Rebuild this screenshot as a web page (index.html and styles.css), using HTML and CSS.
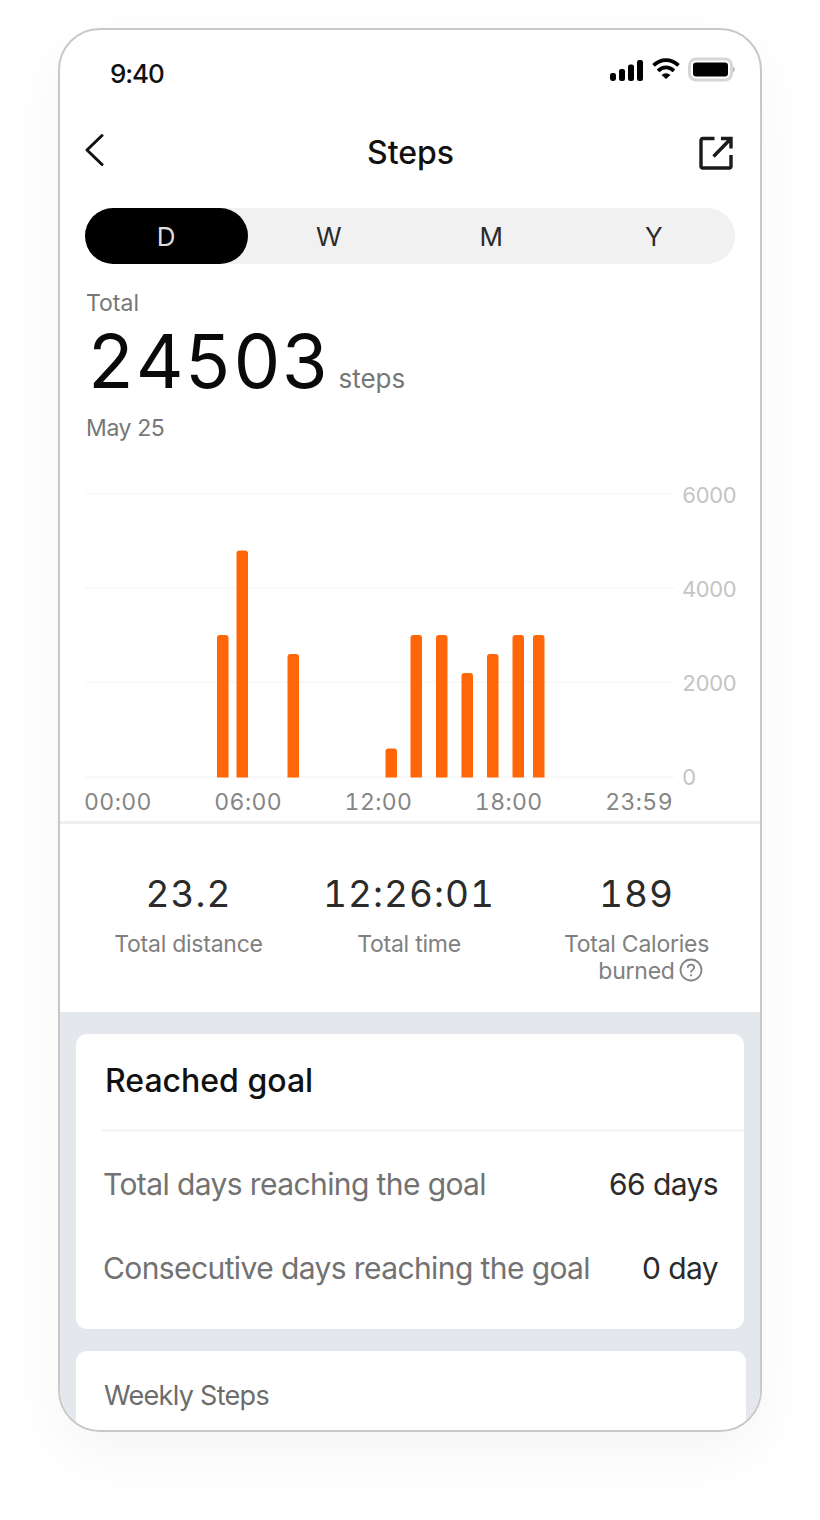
FILE: index.html
```html
<!DOCTYPE html>
<html lang="en">
<head>
<meta charset="UTF-8">
<meta name="viewport" content="width=device-width, initial-scale=1.0">
<title>Steps</title>
<link rel="stylesheet" href="styles.css">
</head>
<body>

<div class="phone">

    <!-- STATUS BAR -->
    <div class="status">
        <span class="time">9:40</span>
        <svg class="status-icons" width="125" height="26" viewBox="0 0 125 26">
            <rect x="0" y="16" width="6" height="8" rx="2.4"/>
            <rect x="9" y="12" width="6" height="12" rx="2.2"/>
            <rect x="18" y="7.5" width="6" height="16.5" rx="2.2"/>
            <rect x="27" y="3" width="6" height="21" rx="2.2"/>
            <path d="M43.500 8.300C51 1.300 61 1.300 68.500 8.300M48 13.800C53 9.300 59 9.300 64 13.800" fill="none" stroke="#000" stroke-width="3.8"/>
            <path d="M51.500 18Q56 14.500 60.500 18L56 22Z"/>
            <rect x="79.5" y="2" width="42" height="21" rx="6.5" fill="#fff" stroke="#d6d6d6" stroke-width="3"/>
            <rect x="83" y="5.5" width="35" height="14" rx="3"/>
            <path d="M123 9.500Q125 11 125 12.500T123 15.500Z" fill="#bbb"/>
        </svg>
    </div>

    <!-- HEADER -->
    <div class="header">
        <svg class="back" width="20" height="34" viewBox="0 0 20 34">
            <path d="M17 2.500L2 17L17 31.500" fill="none" stroke="#111" stroke-width="3" stroke-linecap="round" stroke-linejoin="round"/>
        </svg>
        <h1>Steps</h1>
        <svg width="34" height="34" viewBox="0 0 34 34" fill="none" stroke="#1a1a1a" stroke-width="3.4">
            <path d="M15.500 2.500H4Q2 2.500 2 4.500V30Q2 32 4 32H30Q32 32 32 30V19"/>
            <path d="M22 2.500H32V12.500M31.500 3L14.500 20.500"/>
        </svg>
    </div>

    <!-- TABS -->
    <div class="tabs">
        <div class="tab active">D</div>
        <div class="tab">W</div>
        <div class="tab">M</div>
        <div class="tab">Y</div>
    </div>

    <!-- TOTAL -->
    <div class="total">
        <div class="label">Total</div>
        <div class="value"><span class="number">24503</span><span class="unit">steps</span></div>
        <div class="date">May 25</div>
    </div>

    <!-- CHART -->
    <div class="chart">
        <svg class="plot" width="590" height="287" viewBox="0 0 590 287">
            <g fill="#f9f9f9">
                <rect y="1" width="589" height="2"/>
                <rect y="95" width="589" height="2"/>
                <rect y="189" width="589" height="2"/>
                <rect y="284" width="589" height="2"/>
            </g>
            <g fill="#ff6607">
                <path d="M132 285.500V146q0-3 3-3h5.500q3 0 3 3V285.500z"/>
                <path d="M151.500 285.500V61.500q0-3 3-3h5.500q3 0 3 3V285.500z"/>
                <path d="M202.500 285.500V165q0-3 3-3h5.500q3 0 3 3V285.500z"/>
                <path d="M300.500 285.500V259.500q0-3 3-3h5.500q3 0 3 3V285.500z"/>
                <path d="M325.500 285.500V146q0-3 3-3h5.500q3 0 3 3V285.500z"/>
                <path d="M351 285.500V146q0-3 3-3h5.500q3 0 3 3V285.500z"/>
                <path d="M376.500 285.500V184q0-3 3-3h5.500q3 0 3 3V285.500z"/>
                <path d="M402 285.500V165q0-3 3-3h5.500q3 0 3 3V285.500z"/>
                <path d="M427.500 285.500V146q0-3 3-3h5.500q3 0 3 3V285.500z"/>
                <path d="M448 285.500V146q0-3 3-3h5.500q3 0 3 3V285.500z"/>
            </g>
        </svg>
        <div class="y-axis">
            <span>6000</span>
            <span>4000</span>
            <span>2000</span>
            <span>0</span>
        </div>
    </div>
    <div class="x-axis">
        <span>00:00</span>
        <span>06:00</span>
        <span>12:00</span>
        <span>18:00</span>
        <span>23:59</span>
    </div>

    <!-- STATS -->
    <div class="stats">
        <div class="stat">
            <div class="stat-value">23.2</div>
            <div class="stat-label">Total distance</div>
        </div>
        <div class="stat">
            <div class="stat-value">12:26:01</div>
            <div class="stat-label">Total time</div>
        </div>
        <div class="stat">
            <div class="stat-value">189</div>
            <div class="stat-label">Total Calories</div>
            <div class="stat-label burned">burned
                <svg width="24" height="24" viewBox="0 0 24 24" fill="none" stroke="#858585" stroke-width="1.8">
                    <circle cx="12" cy="12" r="10.5"/>
                    <path d="M8.800 9.700C8.800 5.500 15.200 5.700 15.200 9.500C15.200 12 12 11.800 12 14.500M12 16.200V18.200"/>
                </svg>
            </div>
        </div>
    </div>

    <!-- CARDS -->
    <div class="cards">
        <div class="card">
            <h2>Reached goal</h2>
            <div class="row"><span>Total days reaching the goal</span><b>66 days</b></div>
            <div class="row"><span>Consecutive days reaching the goal</span><b>0 day</b></div>
        </div>
        <div class="card weekly">Weekly Steps</div>
    </div>

</div>

</body>
</html>
```
FILE: styles.css
```css
* { box-sizing: border-box; }
body {
    margin: 0;
    padding: 28px 58px 0;
    height: 1520px;
    overflow: hidden;
    background: #fff;
    color: #111;
    font-family: Inter, "Liberation Sans", sans-serif;
}
h1, h2 { margin: 0; font-weight: 500; }
svg { display: block; flex: none; }
.phone {
    width: 704px;
    height: 1404px;
    background: #fff;
    border: 2px solid #c8c8c8;
    border-radius: 42px;
    box-shadow: 0 22px 64px rgba(0,0,0,0.045);
    overflow: hidden;
}
.status {
    display: flex;
    justify-content: space-between;
    height: 78px;
    padding: 27px 25px 0 50px;
}
.time { font-size: 26px; line-height: 34px; font-weight: 500; letter-spacing: -1.1px; }
.header {
    display: flex;
    align-items: center;
    justify-content: space-between;
    height: 90px;
    padding: 0 27px 1px 25px;
}
.back { margin-bottom: 5px; }
.header h1 { font-size: 32px; line-height: 40px; padding-left: 17px; }

/* tabs */
.tabs {
    display: flex;
    height: 56px;
    margin: 10px 25px 0;
    background: #f1f1f1;
    border-radius: 28px;
}
.tab {
    flex: 1;
    color: #2b2b2b;
    font-size: 26px;
    line-height: 57px;
    text-align: center;
}
.tab.active { background: #000; color: #ddd; border-radius: 28px; }

/* total */
.total { height: 229px; padding: 22px 26px 0; color: #777; }
.label { font-size: 23px; line-height: 34px; }
.value { display: flex; align-items: baseline; height: 92px; }
.number {
    color: #0a0a0a;
    font-size: 74px;
    line-height: 82px;
    letter-spacing: 0.7px;
    padding-left: 1px;
    font-variant-numeric: tabular-nums;
}
.unit { font-size: 26px; margin-left: 8px; }
.date { font-size: 23px; line-height: 32px; letter-spacing: -0.4px; }

/* chart */
.chart { display: flex; padding: 0 0 0 25px; height: 286px; margin-top: -1px; }
.y-axis {
    display: flex;
    flex-direction: column;
    justify-content: space-between;
    height: 310px;
    margin: -11px 0 0 7px;
    color: #c4c4c4;
    font-size: 22px;
    line-height: 28px;
    letter-spacing: -0.8px;
    font-variant-numeric: tabular-nums;
}
.x-axis {
    display: flex;
    justify-content: space-between;
    height: 46px;
    padding: 9px 87px 0 24px;
    border-bottom: 3px solid #efefef;
    color: #858585;
    font-size: 23px;
    line-height: 30px;
    letter-spacing: 0.4px;
    font-variant-numeric: tabular-nums;
}

/* stats */
.stats { display: flex; height: 188px; padding-top: 46px; }
.stat { text-align: center; width: 226px; }
.stat:first-child { width: 236px; padding-left: 21px; }
.stat:last-child { padding-left: 3px; }
.stat-value {
    color: #2b2b2b;
    font-size: 37px;
    line-height: 48px;
    letter-spacing: 1px;
    font-variant-numeric: tabular-nums;
}
.stat-label { color: #808080; font-size: 23px; line-height: 27px; letter-spacing: -0.25px; margin-top: 13px; }
.burned {
    display: flex;
    justify-content: center;
    gap: 4px;
    margin: 0 0 0 28px;
}

/* cards */
.cards { background: #e4e7ec; height: 420px; padding: 22px 14px 0 16px; }
.card { background: #fff; border-radius: 11px; height: 295px; margin-right: 2px; }
.card h2 {
    height: 98px;
    margin-left: 26px;
    padding-left: 3px;
    border-bottom: 3px solid #f6f6f6;
    font-size: 32px;
    line-height: 94px;
}
.row {
    display: flex;
    justify-content: space-between;
    padding: 0 26px 0 27px;
    color: #727272;
    font-size: 30px;
    line-height: 84px;
    letter-spacing: -0.6px;
}
.row:nth-child(2) { margin-top: 10px; }
.row b { color: #2b2b2b; font-weight: 400; }
.weekly {
    margin: 22px 0 0;
    padding-left: 28px;
    color: #6c6c6c;
    font-size: 27px;
    line-height: 90px;
    letter-spacing: -0.7px;
}
```
